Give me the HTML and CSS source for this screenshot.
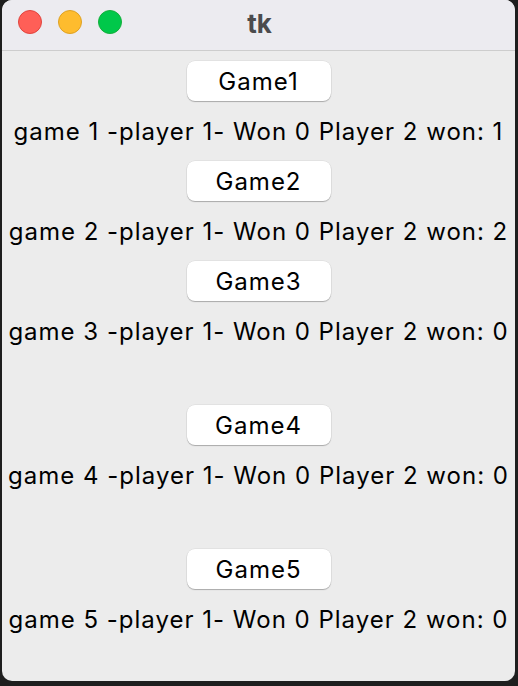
FILE: index.html
```html
<!DOCTYPE html>
<html>
<head>
<meta charset="utf-8">
<link rel="stylesheet" href="styles.css">
</head>
<body>
<div class="window">
  <div class="titlebar">
    <div class="lights">
      <span class="light red"></span>
      <span class="light yellow"></span>
      <span class="light green"></span>
    </div>
    <div class="title">tk</div>
  </div>
  <div class="content">
    <button class="btn">Game1</button>
    <div class="label">game 1 -player 1- Won 0 Player 2 won: 1</div>
    <button class="btn">Game2</button>
    <div class="label">game 2 -player 1- Won 0 Player 2 won: 2</div>
    <button class="btn">Game3</button>
    <div class="label label-tall">game 3 -player 1- Won 0 Player 2 won: 0</div>
    <button class="btn">Game4</button>
    <div class="label label-tall">game 4 -player 1- Won 0 Player 2 won: 0</div>
    <button class="btn">Game5</button>
    <div class="label">game 5 -player 1- Won 0 Player 2 won: 0</div>
  </div>
</div>
</body>
</html>
```

FILE: styles.css
```css
html, body {
  margin: 0;
  padding: 0;
  background: #1e1e1e;
  width: 518px;
  height: 686px;
  overflow: hidden;
}
body {
  font-family: Inter, "Liberation Sans", sans-serif;
  color: #000;
}
.window {
  margin-left: 2px;
  width: 513px;
  height: 681px;
  border-radius: 10px;
  overflow: hidden;
  background: #ececec;
  display: flex;
  flex-direction: column;
}
.titlebar {
  position: relative;
  height: 50px;
  flex: 0 0 50px;
  background: #ecebf0;
  border-bottom: 1px solid #cdcdcd;
  display: flex;
  align-items: center;
  justify-content: center;
}
.lights {
  position: absolute;
  left: 16px;
  top: 10px;
  display: flex;
  gap: 16px;
}
.light {
  width: 24px;
  height: 24px;
  border-radius: 50%;
  box-sizing: border-box;
}
.red { background: #ff5f57; border: 1px solid #e0443e; }
.yellow { background: #febc2e; border: 1px solid #dea123; }
.green { background: #00c84a; border: 1px solid #14ae3b; }
.title {
  font-weight: 700;
  font-size: 26px;
  color: #4b4b4d;
  margin-top: -4px;
  margin-left: 2px;
}
.content {
  display: flex;
  flex-direction: column;
  align-items: center;
  padding-top: 10px;
}
.btn {
  width: 144px;
  height: 40px;
  border: none;
  border-radius: 8px;
  background: #fff;
  box-shadow: 0 1px 1px rgba(0,0,0,0.25), 0 0 0 0.5px rgba(0,0,0,0.08);
  font-family: Inter, "Liberation Sans", sans-serif;
  font-size: 24px;
  letter-spacing: 1px;
  color: #000;
  padding: 0;
}
.label {
  height: 60px;
  line-height: 61px;
  font-size: 24px;
  letter-spacing: 1px;
  white-space: nowrap;
}
.label-tall {
  margin-bottom: 44px;
}
```
